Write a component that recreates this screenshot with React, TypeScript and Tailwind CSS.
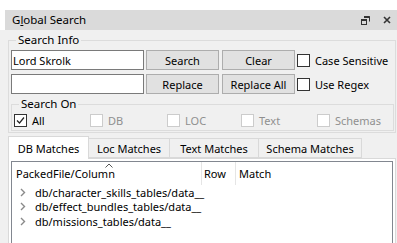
import type { ReactNode } from "react";

const font = { fontFamily: '"Noto Sans", "Segoe UI", sans-serif' };

function CheckBox({
  label,
  checked = false,
  disabled = false,
}: {
  label: string;
  checked?: boolean;
  disabled?: boolean;
}) {
  return (
    <label className="flex items-center gap-[5px]">
      <span
        className={`grid h-[13px] w-[13px] shrink-0 place-items-center border bg-white ${
          disabled ? "border-[#cccccc]" : "border-[#333333]"
        }`}
      >
        {checked && (
          <svg width="9" height="9" viewBox="0 0 9 9" aria-hidden="true">
            <polyline
              points="1,4.5 3.5,7 8,1.5"
              fill="none"
              stroke="#222"
              strokeWidth="1.2"
            />
          </svg>
        )}
      </span>
      <span className={disabled ? "text-[#8f8f8f]" : "text-black"}>{label}</span>
    </label>
  );
}

function Button({ children }: { children: ReactNode }) {
  return (
    <button className="h-[20px] w-[73px] shrink-0 border border-[#adadad] bg-[#e1e1e1] text-black">
      {children}
    </button>
  );
}

function Input({ value }: { value?: string }) {
  return (
    <div className="flex h-[20px] w-[133px] shrink-0 items-center border border-[#7a7a7a] bg-white px-[1px]">
      {value}
    </div>
  );
}

const tabs = [
  { label: "DB Matches", w: "w-[81px]", active: true },
  { label: "Loc Matches", w: "w-[81px]", active: false },
  { label: "Text Matches", w: "w-[89px]", active: false },
  { label: "Schema Matches", w: "w-[103px]", active: false },
];

const rows = [
  "db/character_skills_tables/data__",
  "db/effect_bundles_tables/data__",
  "db/missions_tables/data__",
];

export default function App() {
  return (
    <div
      className="h-[243px] w-[397px] overflow-hidden bg-[#f0f0f0] text-[11px] leading-none text-black"
      style={font}
    >
      <div className="h-[10px] bg-white" />
      <div className="bg-white pl-[5px]">
        <div className="flex h-[20px] items-center bg-[#dadada] pl-[7px] pr-[6px]">
          <span className="flex-1 text-[11.5px]">
            G<span className="underline">l</span>obal Search
          </span>
          <svg width="9" height="9" viewBox="0 0 9 9" className="mr-[13px]" aria-hidden="true">
            <path d="M3 0.5h5.5v5" fill="none" stroke="#333" strokeWidth="1" />
            <path d="M3 1h5.5" stroke="#333" strokeWidth="2" />
            <rect x="0.5" y="3.5" width="5" height="5" fill="#dadada" stroke="#333" strokeWidth="1" />
            <path d="M0.5 4h5" stroke="#333" strokeWidth="2" />
          </svg>
          <svg width="8" height="8" viewBox="0 0 8 8" aria-hidden="true">
            <path d="M1 1l6 6M7 1l-6 6" stroke="#333" strokeWidth="1.6" />
          </svg>
        </div>
      </div>

      <fieldset className="ml-[8px] mt-[2px] w-[388px] border border-[#dcdcdc] pb-[1px] pl-[2px] pr-[1px]">
        <legend className="ml-[5px] px-[2px] leading-[16px] text-[11.5px]">Search Info</legend>
        <div className="flex flex-col gap-[4px] pt-[2px]">
          <div className="flex items-center">
            <Input value="Lord Skrolk" />
            <div className="ml-[2px]">
              <Button>Search</Button>
            </div>
            <div className="ml-[3px]">
              <Button>Clear</Button>
            </div>
            <div className="ml-[2px]">
              <CheckBox label="Case Sensitive" />
            </div>
          </div>
          <div className="flex items-center">
            <Input />
            <div className="ml-[2px]">
              <Button>Replace</Button>
            </div>
            <div className="ml-[3px]">
              <Button>Replace All</Button>
            </div>
            <div className="ml-[2px]">
              <CheckBox label="Use Regex" />
            </div>
          </div>
        </div>
        <fieldset className="mt-[2px] w-[383px] border border-[#dcdcdc] pb-[3px] pl-[2px]">
          <legend className="ml-[5px] px-[2px] leading-[16px] text-[11.5px]">Search On</legend>
          <div className="grid grid-cols-[76px_77px_74px_76px_1fr] pt-[2px]">
            <CheckBox label="All" checked />
            <CheckBox label="DB" disabled />
            <CheckBox label="LOC" disabled />
            <CheckBox label="Text" disabled />
            <CheckBox label="Schemas" disabled />
          </div>
        </fieldset>
      </fieldset>

      <div className="ml-[8px] mt-[2px] flex h-[23px] items-end">
        {tabs.map((t) =>
          t.active ? (
            <div
              key={t.label}
              className={`relative z-10 -mb-px flex h-[23px] ${t.w} items-center justify-center border border-b-0 border-[#d9d9d9] bg-white`}
            >
              {t.label}
            </div>
          ) : (
            <div
              key={t.label}
              className={`flex h-[20px] ${t.w} items-center justify-center border border-l-0 border-[#d9d9d9] bg-[#f0f0f0]`}
            >
              {t.label}
            </div>
          )
        )}
      </div>
      <div className="ml-[8px] h-[100px] w-[388px] border border-[#d9d9d9] bg-white pl-[2px] pt-[2px]">
        <div className="h-[90px] w-[382px] border border-[#828790] bg-white">
          <div className="flex h-[23px] items-center">
            <div className="relative flex h-full w-[190px] items-center border-r border-[#e5e5e5] pl-[4px]">
              PackedFile/Column
              <svg
                width="8"
                height="5"
                viewBox="0 0 8 5"
                className="absolute left-[93px] top-[1px]"
                aria-hidden="true"
              >
                <polyline points="0.5,4.5 4,1 7.5,4.5" fill="none" stroke="#555" strokeWidth="1" />
              </svg>
            </div>
            <div className="flex h-full w-[34px] items-center border-r border-[#e5e5e5] pl-[2px]">
              Row
            </div>
            <div className="pl-[3px]">Match</div>
          </div>
          {rows.map((r) => (
            <div key={r} className="flex h-[14.5px] items-center">
              <svg width="6" height="9" viewBox="0 0 6 9" className="ml-[8px] mr-[9px]" aria-hidden="true">
                <polyline points="1,1 4.5,4.5 1,8" fill="none" stroke="#8a8a8a" strokeWidth="1.4" />
              </svg>
              {r}
            </div>
          ))}
        </div>
      </div>
    </div>
  );
}
